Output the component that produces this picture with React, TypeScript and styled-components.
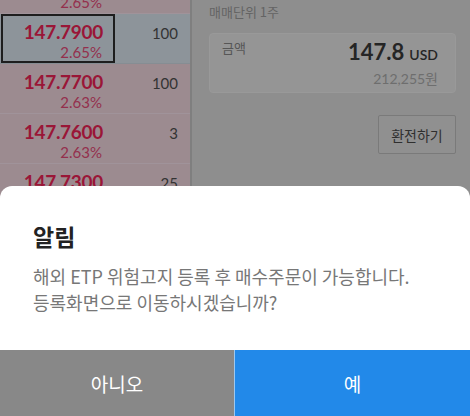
import React from "react";
import styled, { createGlobalStyle } from "styled-components";

const Global = createGlobalStyle`
  html, body { margin: 0; padding: 0; }
  body { width: 470px; height: 416px; overflow: hidden; background: #8e8e8e;
    font-family: "Noto Sans CJK KR", "Noto Sans", sans-serif; }
`;

const Screen = styled.div`
  position: relative;
  width: 470px;
  height: 416px;
  overflow: hidden;
  display: grid;
  grid-template-columns: 192px 1fr;
  background: #8e8e8e;
`;

const Book = styled.div`
  border-right: 2px solid #7f7f7f;
  overflow: hidden;
`;

const BookList = styled.div`
  margin-top: -36px;
`;

const Row = styled.div<{ $selected?: boolean }>`
  display: grid;
  grid-template-columns: 115px 1fr;
  height: 49px;
  border-bottom: 1px solid ${(p) => (p.$selected ? "#868d93" : "#a0939a")};
  background: ${(p) => (p.$selected ? "#8d949a" : "#9c8b90")};
`;

const PriceCell = styled.div<{ $selected?: boolean }>`
  box-sizing: border-box;
  display: flex;
  flex-direction: column;
  align-items: flex-end;
  padding: 6px 10px 0 0;
  margin-left: 1px;
  border: 2px solid ${(p) => (p.$selected ? "#1e1e1e" : "transparent")};
  height: 49px;
`;

const Price = styled.div`
  font-family: Lato, "Noto Sans", sans-serif;
  font-weight: 700;
  font-size: 19px;
  letter-spacing: -0.3px;
  line-height: 20px;
  color: #9a1637;
`;

const Pct = styled.div`
  font-family: Lato, "Noto Sans", sans-serif;
  font-size: 15px;
  line-height: 17px;
  margin-top: 2px;
  color: #94304d;
  padding-right: 1px;
`;

const Qty = styled.div`
  font-family: Lato, "Noto Sans", sans-serif;
  font-size: 15px;
  color: #333;
  text-align: right;
  padding: 10px 12px 0 0;
`;

const Side = styled.div`
  padding: 3px 14px 0 17px;
  display: flex;
  flex-direction: column;
`;

const Unit = styled.div`
  font-size: 13px;
  line-height: 18px;
  color: #646464;
`;

const AmountCard = styled.div`
  margin-top: 12px;
  height: 60px;
  box-sizing: border-box;
  border-radius: 4px;
  background: #959595;
  border: 1px solid #999;
  display: flex;
  justify-content: space-between;
  padding: 4px 17px 0 12px;
`;

const AmountLabel = styled.div`
  font-size: 13px;
  line-height: 20px;
  color: #565656;
`;

const AmountValues = styled.div`
  display: flex;
  flex-direction: column;
  align-items: flex-end;
`;

const Usd = styled.div`
  display: flex;
  align-items: baseline;
  gap: 5px;
  color: #252525;
  font-family: Lato, "Noto Sans", sans-serif;
  line-height: 28px;
`;

const UsdNum = styled.span`
  font-size: 22px;
  font-weight: 700;
`;

const UsdUnit = styled.span`
  font-size: 14px;
  font-weight: 600;
`;

const Krw = styled.div`
  font-size: 14px;
  line-height: 20px;
  color: #6e6e6e;
  font-family: Lato, "Noto Sans CJK KR", sans-serif;
`;

const ExchangeButton = styled.button`
  align-self: flex-end;
  margin-top: 22px;
  width: 78px;
  height: 39px;
  border: 1px solid #7a7a7a;
  border-radius: 2px;
  background: #909090;
  font-family: "Noto Sans CJK KR", sans-serif;
  font-size: 14px;
  color: #2f2f2f;
  padding: 0;
`;

const Sheet = styled.div`
  position: absolute;
  left: 0;
  right: 0;
  bottom: 0;
  height: 230px;
  background: #fff;
  border-radius: 12px 12px 0 0;
  display: flex;
  flex-direction: column;
  overflow: hidden;
`;

const SheetBody = styled.div`
  flex: 1;
  padding: 34px 33px 0 33px;
`;

const Title = styled.div`
  font-size: 23px;
  font-weight: 700;
  line-height: 32px;
  color: #222;
`;

const Message = styled.div`
  margin-top: 11px;
  font-size: 18px;
  line-height: 26px;
  color: #777;
`;

const Actions = styled.div`
  display: grid;
  grid-template-columns: 234px 1fr;
  height: 66px;
`;

const ActionButton = styled.button<{ $primary?: boolean }>`
  border: none;
  margin: 0;
  padding: 0;
  background: ${(p) => (p.$primary ? "#2289e9" : "#888888")};
  border-left: ${(p) => (p.$primary ? "1px solid #9cc8f0" : "none")};
  color: #fff;
  font-family: "Noto Sans CJK KR", sans-serif;
  font-size: 19px;
`;

const rows = [
  { price: "147.8000", pct: "2.65%", qty: "50" },
  { price: "147.7900", pct: "2.65%", qty: "100", selected: true },
  { price: "147.7700", pct: "2.63%", qty: "100" },
  { price: "147.7600", pct: "2.63%", qty: "3" },
  { price: "147.7300", pct: "2.61%", qty: "25" },
  { price: "147.7200", pct: "2.61%", qty: "10" },
];

export default function App() {
  return (
    <>
      <Global />
      <Screen>
        <Book>
          <BookList>
            {rows.map((r) => (
              <Row key={r.price} $selected={r.selected}>
                <PriceCell $selected={r.selected}>
                  <Price>{r.price}</Price>
                  <Pct>{r.pct}</Pct>
                </PriceCell>
                <Qty>{r.qty}</Qty>
              </Row>
            ))}
          </BookList>
        </Book>
        <Side>
          <Unit>매매단위 1주</Unit>
          <AmountCard>
            <AmountLabel>금액</AmountLabel>
            <AmountValues>
              <Usd>
                <UsdNum>147.8</UsdNum>
                <UsdUnit>USD</UsdUnit>
              </Usd>
              <Krw>212,255원</Krw>
            </AmountValues>
          </AmountCard>
          <ExchangeButton>환전하기</ExchangeButton>
        </Side>
        <Sheet>
          <SheetBody>
            <Title>알림</Title>
            <Message>
              해외 ETP 위험고지 등록 후 매수주문이 가능합니다.
              <br />
              등록화면으로 이동하시겠습니까?
            </Message>
          </SheetBody>
          <Actions>
            <ActionButton>아니오</ActionButton>
            <ActionButton $primary>예</ActionButton>
          </Actions>
        </Sheet>
      </Screen>
    </>
  );
}
